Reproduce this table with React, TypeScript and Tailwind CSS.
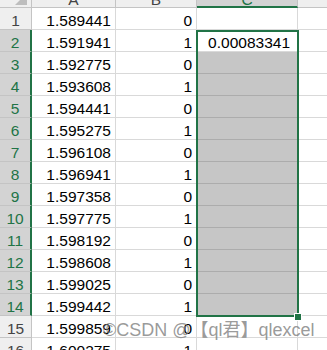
import React from "react";

const A = [
  "1.589441","1.591941","1.592775","1.593608","1.594441","1.595275","1.596108","1.596941",
  "1.597358","1.597775","1.598192","1.598608","1.599025","1.599442","1.599859","1.600275",
];

export default function App() {
  return (
    <div className="relative h-[350px] w-[327px] overflow-hidden bg-white font-['Liberation_Sans','Noto_Sans_CJK_SC',sans-serif] text-[15.5px] text-black">
      <div className="-mt-[14px] flex flex-col">
        {/* header row */}
        <div className="flex h-[22px]">
          <div className="relative w-[32px] shrink-0 border-r border-b border-[#c4c4c4] bg-[#efefef]">
            <svg className="absolute right-[4px] bottom-[2px]" width="12" height="12" viewBox="0 0 12 12">
              <polygon points="0,12 12,12 12,0" fill="#bdbdbd" />
            </svg>
          </div>
          <div className="w-[84px] shrink-0 border-r border-b border-[#c4c4c4] bg-[#efefef] pt-[3px] text-center leading-[22px] text-[#444]">A</div>
          <div className="w-[81px] shrink-0 border-r border-b border-[#c4c4c4] bg-[#efefef] pt-[3px] text-center leading-[22px] text-[#444]">B</div>
          <div className="w-[101px] shrink-0 border-r border-[#c4c4c4] border-b-2 border-b-[#217346] bg-[#d3d3d3] pt-[3px] text-center leading-[22px] text-[#217346]">C</div>
          <div className="flex-1 border-b border-[#c4c4c4] bg-[#efefef]"></div>
        </div>
        {A.map((a, i) => {
          const n = i + 1;
          const sel = n >= 2 && n <= 14;
          const gray = n >= 3 && n <= 14;
          return (
            <div key={n} className="flex h-[22px]">
              <div
                className={
                  sel
                    ? "w-[32px] shrink-0 overflow-hidden border-b border-b-[#c4c4c4] border-r-2 border-r-[#217346] bg-[#d3d3d3] pt-[2px] text-center leading-[22px] text-[#217346]"
                    : "w-[32px] shrink-0 overflow-hidden border-b border-r border-[#c4c4c4] bg-[#efefef] pt-[2px] text-center leading-[22px] text-[#444]"
                }
              >
                {n}
              </div>
              <div className="w-[84px] shrink-0 overflow-hidden border-r border-b border-[#d9d9d9] pt-[2px] pr-[4px] text-right leading-[22px]">{a}</div>
              <div className="w-[81px] shrink-0 overflow-hidden border-r border-b border-[#d9d9d9] pt-[2px] pr-[4px] text-right leading-[22px]">{n % 2 === 1 ? "0" : "1"}</div>
              <div
                className={
                  gray
                    ? "w-[101px] shrink-0 overflow-hidden border-r border-b border-[#d9d9d9] border-b-[#acacac] bg-[#c6c6c6]"
                    : "w-[101px] shrink-0 overflow-hidden border-r border-b border-[#d9d9d9] pt-[2px] pr-[7px] text-right leading-[22px]"
                }
              >
                {n === 2 ? "0.00083341" : ""}
              </div>
              <div className="flex-1 border-b border-[#d9d9d9]"></div>
            </div>
          );
        })}
      </div>
      {/* selection border */}
      <div className="absolute left-[196px] top-[30px] h-[287px] w-[103px] border-2 border-[#217346]"></div>
      <div className="absolute left-[294px] top-[313px] h-[6px] w-[6px] border border-white bg-[#217346] box-content"></div>
      {/* watermark */}
      <div className="absolute left-[103px] top-[321px] whitespace-nowrap text-[18px] leading-[18px] text-[#808080]/80">
        ©CSDN @【ql君】qlexcel
      </div>
    </div>
  );
}
